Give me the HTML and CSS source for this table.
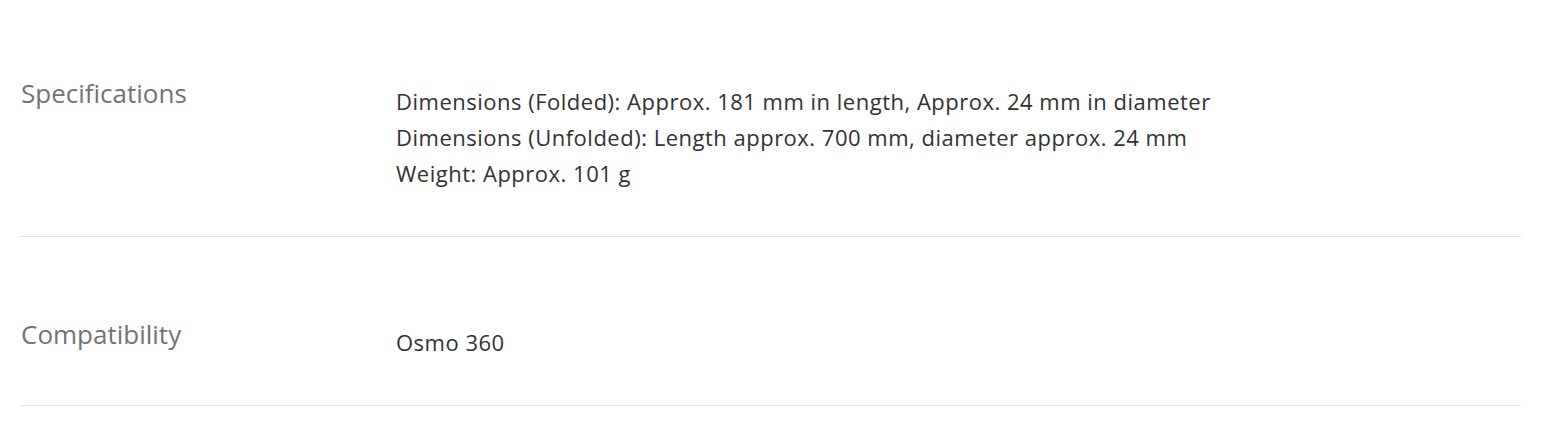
FILE: index.html
```html
<!DOCTYPE html>
<html lang="en">
<head>
<meta charset="utf-8">
<title>Specs</title>
<link rel="stylesheet" href="styles.css">
</head>
<body>
<div class="specs">
  <div class="spec-row">
    <div class="spec-label">Specifications</div>
    <div class="spec-value">
      <p>Dimensions (Folded): Approx. 181 mm in length, Approx. 24 mm in diameter</p>
      <p>Dimensions (Unfolded): Length approx. 700 mm, diameter approx. 24 mm</p>
      <p>Weight: Approx. 101 g</p>
    </div>
  </div>
  <div class="spec-row">
    <div class="spec-label">Compatibility</div>
    <div class="spec-value">
      <p>Osmo 360</p>
    </div>
  </div>
</div>
</body>
</html>
```
FILE: styles.css
```css
html, body {
  margin: 0;
  padding: 0;
  background: #ffffff;
}
body {
  font-family: "Open Sans", "Liberation Sans", sans-serif;
}
.specs {
  width: 1500px;
  margin-left: 21px;
}
.spec-row {
  display: flex;
  padding: 79px 0 45px;
  border-bottom: 1px solid #e1e1e1;
}
.spec-row:first-child {
  padding-top: 75px;
}
.spec-label {
  width: 375px;
  flex: none;
  font-size: 26px;
  line-height: 36px;
  color: #707473;
}
.spec-value {
  padding-top: 8px;
  font-size: 22px;
  letter-spacing: 0.5px;
  line-height: 36px;
  color: #323232;
}
.spec-value p {
  margin: 0;
}
```
